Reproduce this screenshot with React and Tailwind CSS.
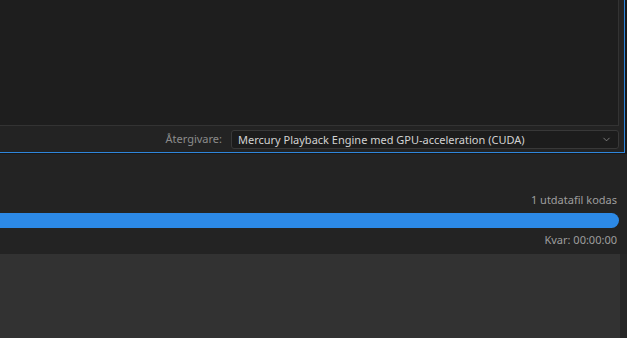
import { ChevronDown } from 'lucide-react'

export default function App() {
  return (
    <div className="w-[627px] h-[338px] bg-[#232323] flex flex-col overflow-hidden" style={{ fontFamily: '"Noto Sans", sans-serif' }}>
      {/* top panel with blue focus border */}
      <div className="h-[154px] shrink-0 flex flex-col">
        <div className="h-[153px] flex">
          <div className="w-[625px] shrink-0 flex flex-col border-r border-b border-[#2f86db]">
            <div className="h-[126px] flex">
              <div className="w-[619px] bg-[#1e1e1e] border-b border-r border-[#333333]" />
              <div className="flex-1 bg-[#232323]" />
            </div>
            <div className="flex-1 flex items-center justify-end pr-[5px] bg-[#232323]">
              <span className="text-[11px] text-[#8c8c8c] mr-[9px]">Återgivare:</span>
              <div className="w-[388px] h-[19px] rounded-[3px] border border-[#383838] bg-[#1c1c1c] flex items-center justify-between px-[6px]">
                <span className="text-[11px] text-[#d2d2d2] leading-none">Mercury Playback Engine med GPU-acceleration (CUDA)</span>
                <ChevronDown className="w-[11px] h-[11px] text-[#a0a0a0]" strokeWidth={1.5} />
              </div>
            </div>
          </div>
          <div className="flex-1 bg-[#181818]" />
        </div>
        <div className="flex-1 bg-[#181818]" />
      </div>

      {/* progress area */}
      <div className="flex-1 flex flex-col pt-[38px]">
        <div className="flex justify-end pr-[10px]">
          <span className="text-[11px] text-[#9e9e9e] leading-[16px]">1 utdatafil kodas</span>
        </div>
        <div className="mt-[5px] h-[15px] w-[619px] bg-[#2c89e6] rounded-r-full" />
        <div className="flex justify-end pr-[10px] mt-[4px]">
          <span className="text-[11px] text-[#9e9e9e] leading-[16px]">Kvar: 00:00:00</span>
        </div>
        <div className="mt-[6px] flex-1 flex">
          <div className="w-[620px] bg-[#323232]" />
          <div className="flex-1 bg-[#262626]" />
        </div>
      </div>
    </div>
  )
}
